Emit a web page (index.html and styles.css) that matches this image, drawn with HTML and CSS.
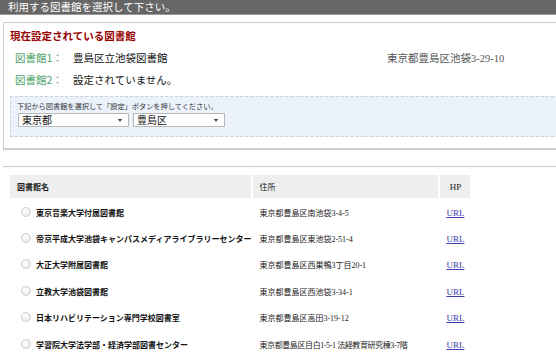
FILE: index.html
```html
<!DOCTYPE html>
<html lang="ja">
<head>
    <meta charset="UTF-8">
    <meta name="viewport" content="width=device-width, initial-scale=1.0">
    <title>図書館の選択</title>
    <link rel="stylesheet" href="styles.css">
</head>
<body>
    <div class="page">
        <div class="title-bar">利用する図書館を選択して下さい。</div>

        <div class="current-box">
            <h2>現在設定されている図書館</h2>
            <div class="lib-row">
                <span class="lib-label">図書館1：</span>
                <span class="lib-name">豊島区立池袋図書館</span>
                <span class="lib-addr">東京都豊島区池袋3-29-10</span>
            </div>
            <div class="lib-row">
                <span class="lib-label">図書館2：</span>
                <span class="lib-name">設定されていません。</span>
            </div>

            <div class="select-panel">
                <p>下記から図書館を選択して「設定」ボタンを押してください。</p>
                <div class="selects">
                    <label class="pick pick-pref">
                        <select>
                            <option>東京都</option>
                        </select>
                    </label>
                    <label class="pick pick-city">
                        <select>
                            <option>豊島区</option>
                        </select>
                    </label>
                </div>
            </div>
        </div>

        <div class="divider"></div>

        <table class="lib-table">
            <thead>
                <tr>
                    <th class="col-name">図書館名</th>
                    <th class="col-addr">住所</th>
                    <th class="col-hp">HP</th>
                </tr>
            </thead>
            <tbody>
                <tr>
                    <td class="col-name"><span class="radio"></span>東京音楽大学付属図書館</td>
                    <td class="col-addr">東京都豊島区南池袋3-4-5</td>
                    <td class="col-hp"><a href="#">URL</a></td>
                </tr>
                <tr>
                    <td class="col-name"><span class="radio"></span>帝京平成大学池袋キャンパスメディアライブラリーセンター</td>
                    <td class="col-addr">東京都豊島区東池袋2-51-4</td>
                    <td class="col-hp"><a href="#">URL</a></td>
                </tr>
                <tr>
                    <td class="col-name"><span class="radio"></span>大正大学附属図書館</td>
                    <td class="col-addr">東京都豊島区西巣鴨3丁目20-1</td>
                    <td class="col-hp"><a href="#">URL</a></td>
                </tr>
                <tr>
                    <td class="col-name"><span class="radio"></span>立教大学池袋図書館</td>
                    <td class="col-addr">東京都豊島区西池袋3-34-1</td>
                    <td class="col-hp"><a href="#">URL</a></td>
                </tr>
                <tr>
                    <td class="col-name"><span class="radio"></span>日本リハビリテーション専門学校図書室</td>
                    <td class="col-addr">東京都豊島区高田3-19-12</td>
                    <td class="col-hp"><a href="#">URL</a></td>
                </tr>
                <tr>
                    <td class="col-name"><span class="radio"></span>学習院大学法学部・経済学部図書センター</td>
                    <td class="col-addr addr-long">東京都豊島区目白1-5-1 法経教育研究棟3-7階</td>
                    <td class="col-hp"><a href="#">URL</a></td>
                </tr>
            </tbody>
        </table>
    </div>
</body>
</html>
```

FILE: styles.css
```css
html, body {
    margin: 0;
    padding: 0;
    overflow: hidden;
    background: #fff;
}

body {
    font-family: "Noto Sans CJK JP", sans-serif;
    color: #222;
}

.page {
    width: 640px;
}

.title-bar {
    background-color: #666;
    color: #fff;
    height: 15px;
    line-height: 13px;
    font-size: 10.5px;
    padding-left: 8px;
    border-bottom: 1px solid #999;
    box-sizing: border-box;
}

.current-box {
    margin: 7px 0 0 3px;
    border: 1px solid #ccc;
    border-bottom-width: 2px;
    padding: 6px 0 11px 0;
}

.current-box h2 {
    margin: 0 0 4px 6px;
    font-size: 10.5px;
    line-height: 13px;
    font-weight: bold;
    color: #990000;
}

.lib-row {
    display: flex;
    height: 22px;
    align-items: center;
    font-size: 10.5px;
}

.lib-label {
    width: 58px;
    padding-left: 11px;
    color: #4fa36a;
}

.lib-name {
    width: 314px;
    color: #111;
}

.lib-addr {
    color: #555;
    font-family: "Liberation Serif", "Noto Sans CJK JP", serif;
    font-size: 10.5px;
}

.select-panel {
    margin: 6px 0 0 6px;
    background-color: #ebf2fc;
    border: 1px dashed #c9d2dc;
    border-right: none;
    padding: 4px 0 9px 6px;
}

.select-panel p {
    margin: 0;
    font-size: 7.2px;
    line-height: 10px;
    color: #333;
}

.selects {
    display: flex;
    gap: 4px;
    margin-top: 2px;
    margin-left: 1px;
}

.pick {
    position: relative;
    display: block;
    height: 14px;
}

.pick select {
    display: block;
    appearance: none;
    -webkit-appearance: none;
    width: 100%;
    height: 14px;
    margin: 0;
    padding: 0 0 0 3px;
    border: 1px solid #b8b8b8;
    border-radius: 0;
    background: #fff;
    font-family: "Noto Sans CJK JP", sans-serif;
    font-size: 10px;
    line-height: 12px;
    color: #111;
    box-sizing: border-box;
}

.pick::after {
    content: "";
    position: absolute;
    right: 7px;
    top: 6px;
    border-left: 2px solid transparent;
    border-right: 2px solid transparent;
    border-top: 3px solid #333;
    pointer-events: none;
}

.pick-pref {
    width: 111px;
}

.pick-city {
    width: 92px;
}

.divider {
    margin: 16px 0 0 3px;
    border-top: 1px solid #ccc;
}

.lib-table {
    margin: 6px 0 0 8px;
    border-collapse: separate;
    border-spacing: 2px;
    font-size: 8px;
}

.lib-table th {
    background-color: #eee;
    height: 23px;
    padding: 0;
    text-align: left;
    font-weight: normal;
    color: #222;
}

.lib-table th.col-name {
    font-weight: bold;
    padding-left: 7px;
}

.lib-table th.col-addr {
    padding-left: 6px;
}

.lib-table th.col-hp {
    text-align: center;
    font-family: "Liberation Serif", serif;
    font-size: 9px;
}

.lib-table td {
    height: 24.4px;
    padding: 0;
    white-space: nowrap;
}

.col-name {
    width: 240px;
    box-sizing: border-box;
}

.col-addr {
    width: 185px;
    box-sizing: border-box;
}

.col-hp {
    width: 30px;
    box-sizing: border-box;
    text-align: center;
}

.lib-table td.col-name {
    font-weight: bold;
    color: #111;
    padding-left: 11px;
}

.lib-table td.col-addr {
    padding-left: 6px;
    font-family: "Liberation Serif", "Noto Sans CJK JP", serif;
    color: #222;
}

.lib-table td.addr-long {
    letter-spacing: -0.4px;
}

.radio {
    display: inline-block;
    width: 8px;
    height: 8px;
    border: 1px solid #cfcfcf;
    border-radius: 50%;
    background: radial-gradient(circle at 40% 35%, #fff, #e2e2e2);
    vertical-align: -1px;
    margin-right: 5px;
}

.lib-table a {
    color: #3d3db0;
    font-family: "Liberation Serif", serif;
    font-size: 9px;
}
```
